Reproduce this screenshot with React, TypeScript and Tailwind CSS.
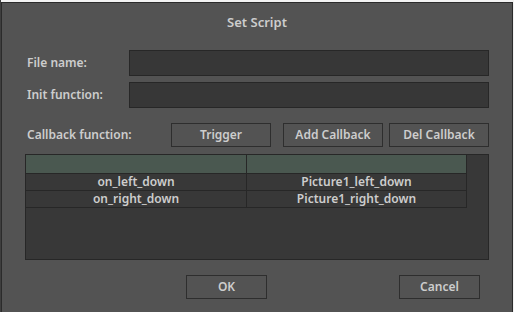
import React from "react";

const rows = [
  { name: "on_left_down", target: "Picture1_left_down" },
  { name: "on_right_down", target: "Picture1_right_down" },
];

function Btn({ label, className }: { label: string; className: string }) {
  return (
    <button
      className={
        "h-[24px] border border-[#2e2e2e] bg-[#535353] text-[12px] leading-none font-semibold text-[#cdcdcd] " +
        className
      }
    >
      {label}
    </button>
  );
}

export default function App(): JSX.Element {
  return (
    <div
      className="flex h-[312px] w-[514px] overflow-hidden bg-[#f2f2f2]"
      style={{ fontFamily: '"Noto Sans", "Liberation Sans", sans-serif' }}
    >
      <div className="w-[1px] bg-[#3e3e3e]" />
      <div className="mt-[2px] flex h-[311px] w-[512px] shrink-0 flex-col border border-[#2b2b2b] bg-[#535353] px-[23px] text-[#cdcdcd]">
        <div className="h-[47px] pt-[10px] text-center text-[13px] leading-[18px] font-semibold">
          Set Script
        </div>

        <div className="flex items-center">
          <div className="w-[104px] pl-[2px] text-[12px] font-semibold">File name:</div>
          <div className="h-[26px] w-[360px] border border-[#272727] bg-[#373737]" />
        </div>
        <div className="mt-[6px] flex items-center">
          <div className="w-[104px] pl-[2px] text-[12px] font-semibold">Init function:</div>
          <div className="h-[26px] w-[360px] border border-[#272727] bg-[#373737]" />
        </div>

        <div className="mt-[15px] flex items-center">
          <div className="w-[146px] pl-[2px] text-[12px] font-semibold">Callback function:</div>
          <Btn label="Trigger" className="w-[100px]" />
          <Btn label="Add Callback" className="ml-[12px] w-[100px]" />
          <Btn label="Del Callback" className="ml-[6px] w-[100px]" />
        </div>

        <div className="mt-[7px] h-[106px] w-[464px] border border-[#272727] bg-[#383838]">
          <div className="flex h-[19px]">
            <div className="w-[221px] border-r border-b border-[#272727] bg-[#4a5850]" />
            <div className="w-[220px] border-r border-b border-[#272727] bg-[#4a5850]" />
          </div>
          {rows.map((r) => (
            <div key={r.name} className="flex h-[17px] text-[12px] leading-[16px] font-semibold">
              <div className="w-[221px] border-r border-b border-[#272727] text-center">{r.name}</div>
              <div className="w-[220px] border-r border-b border-[#272727] text-center">{r.target}</div>
            </div>
          ))}
        </div>

        <div className="mt-[15px] flex">
          <Btn label="OK" className="ml-[161px] w-[81px]" />
          <Btn label="Cancel" className="ml-[132px] w-[81px]" />
        </div>
      </div>
    </div>
  );
}
